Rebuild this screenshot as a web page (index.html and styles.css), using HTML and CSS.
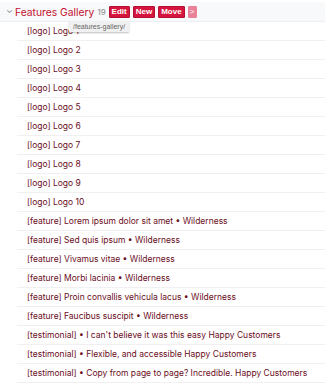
FILE: index.html
```html
<!DOCTYPE html>
<html lang="en">
<head>
    <meta charset="UTF-8">
    <meta name="viewport" content="width=device-width, initial-scale=1.0">
    <title>Features Gallery</title>
    <link rel="stylesheet" href="styles.css">
</head>
<body>

    <div class="section">
        <div class="section-header">
            <span class="toggle">&#8964;</span>
            <span class="section-title">Features Gallery</span>
            <span class="count">19</span>
            <button class="btn">Edit</button>
            <button class="btn">New</button>
            <button class="btn">Move</button>
            <button class="btn btn-more">&gt;</button>
            <div class="tooltip">/features-gallery/</div>
        </div>

        <ul class="items">
            <li>[logo] Logo 1</li>
            <li>[logo] Logo 2</li>
            <li>[logo] Logo 3</li>
            <li>[logo] Logo 4</li>
            <li>[logo] Logo 5</li>
            <li>[logo] Logo 6</li>
            <li>[logo] Logo 7</li>
            <li>[logo] Logo 8</li>
            <li>[logo] Logo 9</li>
            <li>[logo] Logo 10</li>
            <li>[feature] Lorem ipsum dolor sit amet &bull; Wilderness</li>
            <li>[feature] Sed quis ipsum &bull; Wilderness</li>
            <li>[feature] Vivamus vitae &bull; Wilderness</li>
            <li>[feature] Morbi lacinia &bull; Wilderness</li>
            <li>[feature] Proin convallis vehicula lacus &bull; Wilderness</li>
            <li>[feature] Faucibus suscipit &bull; Wilderness</li>
            <li>[testimonial] &bull; I can't believe it was this easy Happy Customers</li>
            <li>[testimonial] &bull; Flexible, and accessible Happy Customers</li>
            <li>[testimonial] &bull; Copy from page to page? Incredible. Happy Customers</li>
        </ul>
    </div>

</body>
</html>
```

FILE: styles.css
```css
body {
    font-family: Inter, "Liberation Sans", Arial, sans-serif;
    margin: 0;
    background: #fff;
}

.section {
    padding-top: 2px;
}

.section-header {
    position: relative;
    display: flex;
    align-items: center;
    height: 19px;
    padding-left: 6px;
    background: #f8f9fb;
    border-bottom: 1px solid #eceef2;
}

.toggle {
    color: #888;
    font-size: 9px;
    margin-right: 2px;
    position: relative;
    top: -2px;
}

.section-title {
    color: #c4122f;
    font-size: 10.3px;
}

.count {
    color: #888;
    font-size: 8px;
    margin-left: 3px;
    margin-right: 3px;
}

.btn {
    font-family: "Liberation Sans", Arial, sans-serif;
    font-size: 8px;
    font-weight: bold;
    color: #fff;
    background: #d5153d;
    border: 1px solid #b50f31;
    border-radius: 1px;
    height: 12px;
    padding: 0 2px;
    margin-right: 3px;
    line-height: 10px;
    cursor: pointer;
}

.btn-more {
    background: #e98298;
    border-color: #e98298;
    width: 9px;
    padding: 0;
    font-weight: normal;
}

.tooltip {
    position: absolute;
    left: 69px;
    top: 19px;
    font-family: "Liberation Sans", Arial, sans-serif;
    font-size: 7px;
    color: #666;
    background: #f0f0f0;
    padding: 2px 4px;
    border-radius: 1px;
    box-shadow: 0 1px 2px rgba(0, 0, 0, 0.25);
    z-index: 2;
}

.items {
    list-style: none;
    margin: 0 0 0 17px;
    padding: 0;
}

.items li {
    height: 18px;
    line-height: 19px;
    padding-left: 10px;
    font-size: 8.5px;
    color: #6b0d1c;
    border-bottom: 1px solid #f0f0f2;
    white-space: nowrap;
}
```
